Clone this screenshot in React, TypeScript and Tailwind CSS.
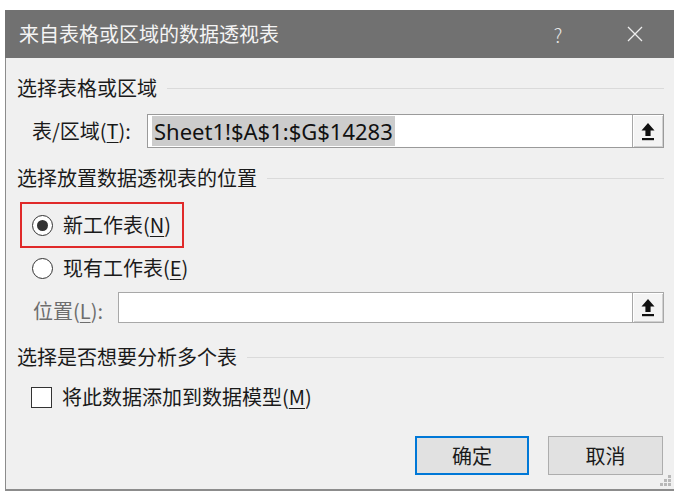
import React from "react";

const cjk = "font-['Noto_Sans_CJK_SC','Noto_Sans',sans-serif]";

function UploadButton() {
  return (
    <div className="flex h-full w-[31px] items-center justify-center border-l border-[#a8a8a8] bg-[#f4f4f4] shadow-[inset_1px_1px_0_#ffffff,inset_-1px_-1px_0_#d0d0d0]">
      <svg width="14" height="19" viewBox="0 0 14 19">
        <polygon points="7,1 0.5,8.5 4.4,8.5 4.4,14 9.6,14 9.6,8.5 13.5,8.5" fill="#111" />
        <rect x="1" y="16" width="12" height="2.2" fill="#111" />
      </svg>
    </div>
  );
}

function SectionHeader({ children }: { children: React.ReactNode }) {
  return (
    <div className="flex h-[30px] items-center">
      <span className="whitespace-nowrap text-[20px] leading-none text-[#1a1a1a]">{children}</span>
      <div className="ml-[10px] h-px flex-1 bg-[#dadada]" />
    </div>
  );
}

function Key({ k }: { k: string }) {
  return <span className="underline decoration-1 underline-offset-[3px]">{k}</span>;
}

function Radio({ checked }: { checked?: boolean }) {
  return (
    <span className="flex h-[21px] w-[21px] items-center justify-center rounded-full border-[1.5px] border-[#333] bg-white">
      {checked && <span className="h-[11px] w-[11px] rounded-full bg-[#333]" />}
    </span>
  );
}

export default function App() {
  return (
    <div className={`h-[500px] w-[685px] bg-white pl-[5px] pt-[10px] ${cjk}`}>
      <div className="relative w-[669px]">
        {/* title bar */}
        <div className="flex h-[48px] items-center bg-[#717171] pl-[14px] pr-[19px]">
          <span className="text-[20px] leading-none text-[#f4f4f4]">来自表格或区域的数据透视表</span>
          <div className="ml-auto flex items-center gap-[37px]">
            <span className="flex w-[40px] justify-center text-[19px] font-light leading-none text-[#e8e8e8]">?</span>
            <span className="flex w-[40px] justify-center">
              <svg width="16" height="16" viewBox="0 0 16 16">
                <path d="M1 1 L15 15 M15 1 L1 15" stroke="#eeeeee" strokeWidth="1.3" />
              </svg>
            </span>
          </div>
        </div>

        {/* body */}
        <div className="border-b-2 border-l border-[#8c8c8c] bg-[#f0f0f0] pb-[14px] pl-[11px] pr-[10px] pt-[15px]">
          <SectionHeader>选择表格或区域</SectionHeader>

          <div className="mt-[11px] flex h-[34px] items-center">
            <span className="w-[130px] pl-[15px] text-[20px] leading-none text-[#1a1a1a]">
              表/区域(<Key k="T" />):
            </span>
            <div className="flex h-full flex-1 items-center border border-[#9a9a9a] bg-white">
              <div className="flex flex-1 items-center pl-[4px]">
                <span className="bg-[#cccccc] px-[2px] font-['Noto_Sans',sans-serif] text-[22px] leading-[30px] text-[#111]">
                  Sheet1!$A$1:$G$14283
                </span>
              </div>
              <UploadButton />
            </div>
          </div>

          <div className="mt-[15px]">
            <SectionHeader>选择放置数据透视表的位置</SectionHeader>
          </div>

          <div className="ml-[3px] mt-[9px] flex h-[46px] w-[164px] items-center border-2 border-[#e02a2a] pl-[10px]">
            <Radio checked />
            <span className="ml-[10px] text-[20px] leading-none text-[#1a1a1a]">
              新工作表(<Key k="N" />)
            </span>
          </div>

          <div className="ml-[15px] mt-[5px] flex h-[30px] items-center">
            <Radio />
            <span className="ml-[10px] text-[20px] leading-none text-[#1a1a1a]">
              现有工作表(<Key k="E" />)
            </span>
          </div>

          <div className="mt-[9px] flex h-[31px] items-center">
            <span className="w-[101px] pl-[16px] pt-[6px] text-[20px] leading-none text-[#6d6d6d]">
              位置(<Key k="L" />):
            </span>
            <div className="flex h-full flex-1 items-center border border-[#a8a8a8] bg-white">
              <div className="flex-1" />
              <UploadButton />
            </div>
          </div>

          <div className="mt-[19px]">
            <SectionHeader>选择是否想要分析多个表</SectionHeader>
          </div>

          <div className="ml-[14px] mt-[10px] flex h-[30px] items-center">
            <span className="h-[21px] w-[21px] border border-[#333] bg-white" />
            <span className="ml-[10px] text-[20px] leading-none text-[#1a1a1a]">
              将此数据添加到数据模型(<Key k="M" />)
            </span>
          </div>

          <div className="mt-[24px] flex justify-end gap-[19px] pr-px">
            <button className="flex h-[39px] w-[114px] items-center justify-center border-2 border-[#0078d7] bg-[#e1e1e1] text-[20px] leading-none text-[#1a1a1a]">
              确定
            </button>
            <button className="flex h-[39px] w-[115px] items-center justify-center border border-[#adadad] bg-[#e1e1e1] text-[20px] leading-none text-[#1a1a1a]">
              取消
            </button>
          </div>
        </div>

        {/* resize grip */}
        <div className="absolute bottom-[4px] right-[2px]">
          <svg width="12" height="12" viewBox="0 0 12 12">
            <rect x="8" y="0" width="3" height="3" fill="#b8b8b8" />
            <rect x="4" y="4" width="3" height="3" fill="#b8b8b8" />
            <rect x="8" y="4" width="3" height="3" fill="#b8b8b8" />
            <rect x="0" y="8" width="3" height="3" fill="#b8b8b8" />
            <rect x="4" y="8" width="3" height="3" fill="#b8b8b8" />
            <rect x="8" y="8" width="3" height="3" fill="#b8b8b8" />
          </svg>
        </div>
      </div>
    </div>
  );
}
